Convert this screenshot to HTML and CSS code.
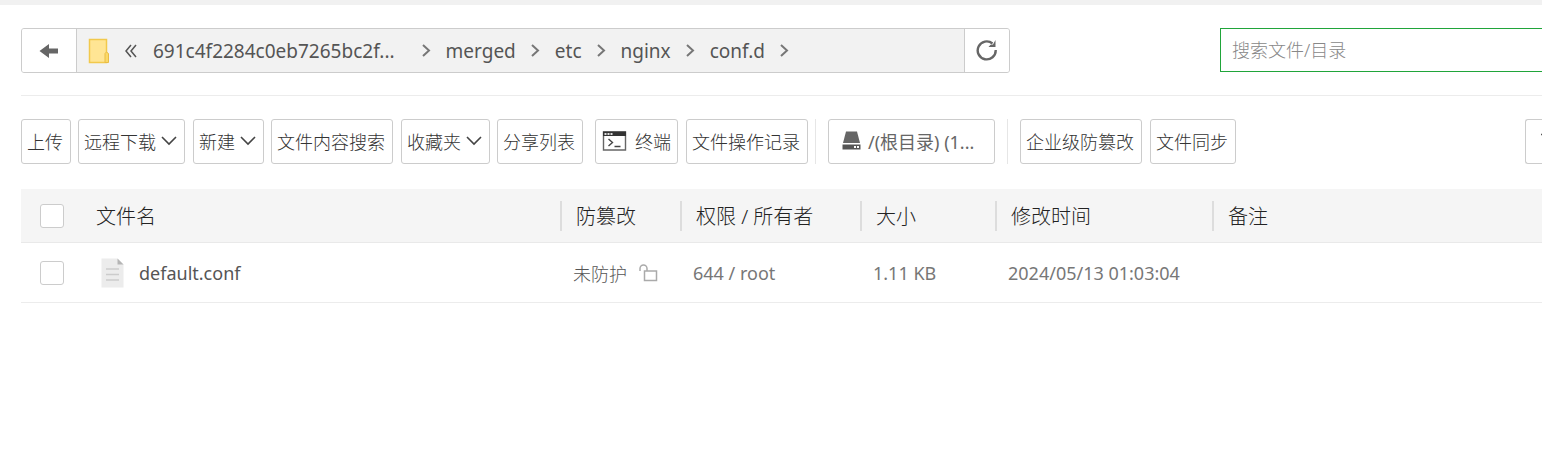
FILE: index.html
```html
<!DOCTYPE html>
<html lang="zh-CN">
<head>
    <meta charset="utf-8"/>
    <meta content="width=device-width, initial-scale=1.0" name="viewport"/>
    <title>文件管理</title>
    <link rel="stylesheet" href="styles.css">
</head>
<body>
    <div class="container">
        <div class="header">
            <div class="path">
                <button class="path-back" aria-label="返回上一级">
                    <svg width="20" height="16" viewBox="0 0 20 16"><path d="M0.5 8 L10 1 V5.5 H19 V10.5 H10 V15 Z" fill="#666"/></svg>
                </button>
                <nav class="crumbs">
                    <svg class="folder" width="22" height="26" viewBox="0 0 22 26">
                        <path d="M1.5 1.5 H18.5 V24.5 H1.5 Z" fill="#ffe594" stroke="#f2c94c" stroke-width="1.5"/>
                        <path d="M17 24.5 V15.5 L18.5 14 L20.5 15.5 V24.5 Z" fill="#fbd968" stroke="#e9bd45"/>
                    </svg>
                    <svg class="fold" width="14" height="14" viewBox="0 0 14 14"><path d="M7 1 L2 7 L7 13 M12 1 L7 7 L12 13" fill="none" stroke="#555" stroke-width="1.5"/></svg>
                    <a class="crumb long" href="#">691c4f2284c0eb7265bc2f...</a>
                    <svg class="arrow" width="9" height="13" viewBox="0 0 9 13"><path d="M1 1 L7 6.5 L1 12" fill="none" stroke="#777" stroke-width="2"/></svg>
                    <a class="crumb" href="#">merged</a>
                    <svg class="arrow" width="9" height="13" viewBox="0 0 9 13"><path d="M1 1 L7 6.5 L1 12" fill="none" stroke="#777" stroke-width="2"/></svg>
                    <a class="crumb" href="#">etc</a>
                    <svg class="arrow" width="9" height="13" viewBox="0 0 9 13"><path d="M1 1 L7 6.5 L1 12" fill="none" stroke="#777" stroke-width="2"/></svg>
                    <a class="crumb" href="#">nginx</a>
                    <svg class="arrow" width="9" height="13" viewBox="0 0 9 13"><path d="M1 1 L7 6.5 L1 12" fill="none" stroke="#777" stroke-width="2"/></svg>
                    <a class="crumb" href="#">conf.d</a>
                    <svg class="arrow" width="9" height="13" viewBox="0 0 9 13"><path d="M1 1 L7 6.5 L1 12" fill="none" stroke="#777" stroke-width="2"/></svg>
                </nav>
                <button class="path-refresh" aria-label="刷新">
                    <svg width="22" height="24" viewBox="0 0 22 24">
                        <path d="M16.5 4.5 A9 9 0 1 0 19.7 11" fill="none" stroke="#666" stroke-width="2.4"/>
                        <path d="M19.5 1 V8 H12.5 L14.5 5.8 L17 5.5 Z" fill="#666"/>
                    </svg>
                </button>
            </div>
            <input class="search" type="text" placeholder="搜索文件/目录" aria-label="搜索文件/目录">
        </div>

        <div class="toolbar">
            <div class="group">
                <button class="btn">上传</button>
                <button class="btn">远程下载<svg width="16" height="10" viewBox="0 0 16 10"><path d="M1 1 L8 8 L15 1" fill="none" stroke="#444" stroke-width="1.6"/></svg></button>
            </div>
            <div class="group">
                <button class="btn">新建<svg width="16" height="10" viewBox="0 0 16 10"><path d="M1 1 L8 8 L15 1" fill="none" stroke="#444" stroke-width="1.6"/></svg></button>
                <button class="btn">文件内容搜索</button>
            </div>
            <div class="group">
                <button class="btn">收藏夹<svg width="16" height="10" viewBox="0 0 16 10"><path d="M1 1 L8 8 L15 1" fill="none" stroke="#444" stroke-width="1.6"/></svg></button>
                <button class="btn">分享列表</button>
            </div>
            <div class="group tools">
                <button class="btn terminal">
                    <svg width="25" height="20" viewBox="0 0 25 20">
                        <path d="M1.5 1 H23.5 V19 H1.5 Z" fill="#fff" stroke="#666" stroke-width="1.4"/>
                        <path d="M1 0.5 H24 V5 H1 Z" fill="#333"/>
                        <path d="M2.5 2 H4.5 V4 H2.5 Z M5.5 2 H7.5 V4 H5.5 Z M8.5 2 H10.5 V4 H8.5 Z" fill="#ddd"/>
                        <path d="M6.5 8 L10.5 11.5 L6.5 15 M12.5 15.5 H18.5" fill="none" stroke="#444" stroke-width="1.4"/>
                    </svg>终端</button>
                <button class="btn">文件操作记录</button>
            </div>
            <div class="group divided">
                <button class="btn disk">
                    <svg width="19" height="19" viewBox="0 0 19 19">
                        <path d="M4 0.5 H15 L18 12 H1 Z" fill="#666"/>
                        <path d="M0.5 13.5 H18.5 V18.5 H0.5 Z" fill="#555"/>
                        <path d="M12 15 H14 V17 H12 Z M15 15 H17 V17 H15 Z" fill="#fff"/>
                    </svg>/(根目录) (1...</button>
            </div>
            <div class="group safe">
                <button class="btn">企业级防篡改</button>
                <button class="btn">文件同步</button>
            </div>
            <button class="btn recycle" aria-label="回收站">
                <svg width="18" height="20" viewBox="0 0 18 20"><path d="M0 2.5 H18 M6 2 V0.5 H12 V2 M2 3 V19 H16 V3" fill="none" stroke="#555" stroke-width="1.5"/></svg>
            </button>
        </div>

        <table class="files">
            <thead>
                <tr>
                    <th class="col-check"><input type="checkbox" aria-label="全选"></th>
                    <th class="col-name">文件名</th>
                    <th class="col-lock">防篡改</th>
                    <th class="col-owner">权限 / 所有者</th>
                    <th class="col-size">大小</th>
                    <th class="col-time">修改时间</th>
                    <th>备注</th>
                </tr>
            </thead>
            <tbody>
                <tr>
                    <td class="col-check"><input type="checkbox" aria-label="选择 default.conf"></td>
                    <td>
                        <a class="file" href="#">
                            <svg width="24" height="30" viewBox="0 0 24 30">
                                <path d="M0.5 0.5 H16.5 L22.5 6.5 V29.5 H0.5 Z" fill="#ececec"/>
                                <path d="M16.5 0.5 L22.5 6.5 H16.5 Z" fill="#b5b5b5"/>
                                <path d="M5 11 H18 M5 16.5 H18 M5 22 H18" stroke="#ccc" stroke-width="1.6"/>
                            </svg>
                            default.conf
                        </a>
                    </td>
                    <td>
                        <span class="lock">未防护
                            <svg width="19" height="18" viewBox="0 0 19 18"><path d="M1 7 V4.5 A3.5 3.5 0 0 1 8 4.5 V7 M5.5 7 H17.5 V16.5 H5.5 Z" fill="none" stroke="#aaa" stroke-width="1.5"/></svg>
                        </span>
                    </td>
                    <td>644 / root</td>
                    <td>1.11 KB</td>
                    <td>2024/05/13 01:03:04</td>
                    <td></td>
                </tr>
            </tbody>
        </table>
    </div>
</body>
</html>
```
FILE: styles.css
```css
* {
    box-sizing: border-box;
}
body {
    margin: 0;
    border-top: 5px solid #f1f1f1;
    background-color: #fff;
    color: #555;
    font-family: "Noto Sans", "Noto Sans CJK SC", sans-serif;
    font-size: 18px;
    overflow-x: hidden;
}
button, input {
    font-family: inherit;
    font-size: inherit;
    color: inherit;
}
button {
    cursor: pointer;
}
a {
    color: inherit;
    text-decoration: none;
}
svg {
    flex: none;
}
.container {
    padding: 23px 0 0 21px;
}
.header {
    display: flex;
    align-items: flex-start;
    padding-bottom: 22px;
    border-bottom: 1px solid #ececec;
}

/* Path bar */
.path {
    display: flex;
    flex: 0 1 989px;
    height: 45px;
    border: 1px solid #ccc;
    border-radius: 3px;
    background-color: #f2f2f2;
    overflow: hidden;
}
.path-back, .path-refresh {
    display: flex;
    align-items: center;
    justify-content: center;
    padding: 0;
    border: none;
    background-color: #fff;
}
.path-back {
    width: 55px;
    border-right: 1px solid #ccc;
}
.path-refresh {
    width: 45px;
    border-left: 1px solid #ccc;
}
.crumbs {
    display: flex;
    flex: 1;
    align-items: center;
    padding-left: 11px;
    white-space: nowrap;
}
.fold {
    margin: 0 15px 0 14px;
}
.crumb {
    margin-right: 15px;
    font-size: 19px;
}
.crumb.long {
    margin-right: 27px;
}
.arrow {
    margin-right: 15px;
}
.search {
    flex: 1;
    min-width: 0;
    height: 44px;
    margin-left: 210px;
    padding: 0 11px;
    border: 1px solid #20a53a;
    border-right: none;
    border-radius: 0;
    outline: none;
}
.search::placeholder {
    color: #888;
    font-weight: 300;
}

/* Toolbar */
.toolbar {
    display: flex;
    gap: 8px;
    padding: 23px 0 25px;
}
.group {
    display: flex;
    gap: 7px;
}
.btn {
    display: flex;
    align-items: center;
    gap: 5px;
    height: 45px;
    padding: 0 7px 2px 5px;
    border: 1px solid #ccc;
    border-radius: 3px;
    background-color: #fff;
    color: #333;
    font-weight: 300;
    white-space: nowrap;
}
.tools, .safe {
    gap: 8px;
}
.tools {
    margin-left: 4px;
}
.terminal {
    gap: 8px;
    padding-left: 6px;
    padding-right: 6px;
}
.divided {
    margin-left: -1px;
    padding: 0 12px;
    border-left: 1px solid #e6e6e6;
    border-right: 1px solid #e6e6e6;
}
.disk {
    width: 167px;
    padding: 0 13px 2px;
    gap: 7px;
    color: #666;
    font-weight: 400;
}
.safe {
    margin-left: 4px;
}
.recycle {
    width: 17px;
    margin-left: auto;
    padding: 0 0 0 15px;
    border-right: none;
    border-radius: 3px 0 0 3px;
    overflow: hidden;
}

/* File list */
.files {
    width: 100%;
    border-collapse: separate;
    border-spacing: 0;
    table-layout: fixed;
}
.files th {
    height: 54px;
    padding: 0 0 0 14px;
    border-bottom: 1px solid #e9e9e9;
    background: linear-gradient(#ddd, #ddd) right center / 2px 30px no-repeat #f5f5f5;
    color: #222;
    font-size: 20px;
    font-weight: 300;
    text-align: left;
}
.files th:first-child, .files th:last-child {
    background: #f5f5f5;
}
.files td {
    height: 60px;
    padding: 0 0 0 11px;
    border-bottom: 1px solid #ececec;
    color: #777;
    white-space: nowrap;
}
.files .col-check {
    width: 61px;
    padding-left: 19px;
}
.col-name {
    width: 480px;
}
.col-lock {
    width: 120px;
}
.col-owner {
    width: 180px;
}
.col-size {
    width: 135px;
}
.col-time {
    width: 217px;
}
.files input {
    display: block;
    width: 24px;
    height: 24px;
    margin: 0;
    appearance: none;
    border: 1px solid #ccc;
    border-radius: 3px;
    background-color: #fff;
}
.file {
    display: flex;
    align-items: center;
    gap: 14px;
    padding-left: 8px;
    color: #555;
}
.lock {
    display: flex;
    align-items: center;
    gap: 12px;
    color: #555;
    font-weight: 300;
}
```
